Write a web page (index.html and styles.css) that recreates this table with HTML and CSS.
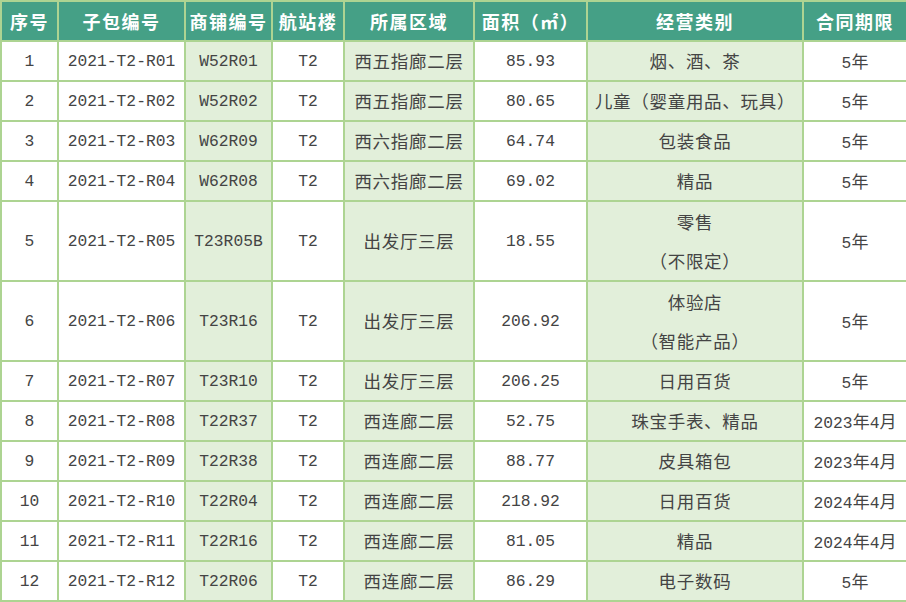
FILE: index.html
```html
<!DOCTYPE html>
<html lang="zh">
<head>
<meta charset="utf-8">
<link rel="stylesheet" href="styles.css">
</head>
<body>
<table class="grid">
  <colgroup>
    <col class="c1"><col class="c2"><col class="c3"><col class="c4"><col class="c5"><col class="c6"><col class="c7"><col class="c8">
  </colgroup>
  <thead>
    <tr><th>序号</th><th>子包编号</th><th>商铺编号</th><th>航站楼</th><th>所属区域</th><th>面积（㎡）</th><th>经营类别</th><th>合同期限</th></tr>
  </thead>
  <tbody>
    <tr><td class="n">1</td><td class="n">2021-T2-R01</td><td class="n alt">W52R01</td><td class="n">T2</td><td class="z alt">西五指廊二层</td><td class="n">85.93</td><td class="z alt">烟、酒、茶</td><td class="n">5<span class="z">年</span></td></tr>
    <tr><td class="n">2</td><td class="n">2021-T2-R02</td><td class="n alt">W52R02</td><td class="n">T2</td><td class="z alt">西五指廊二层</td><td class="n">80.65</td><td class="z alt">儿童（婴童用品、玩具）</td><td class="n">5<span class="z">年</span></td></tr>
    <tr><td class="n">3</td><td class="n">2021-T2-R03</td><td class="n alt">W62R09</td><td class="n">T2</td><td class="z alt">西六指廊二层</td><td class="n">64.74</td><td class="z alt">包装食品</td><td class="n">5<span class="z">年</span></td></tr>
    <tr><td class="n">4</td><td class="n">2021-T2-R04</td><td class="n alt">W62R08</td><td class="n">T2</td><td class="z alt">西六指廊二层</td><td class="n">69.02</td><td class="z alt">精品</td><td class="n">5<span class="z">年</span></td></tr>
    <tr class="tall"><td class="n">5</td><td class="n">2021-T2-R05</td><td class="n alt">T23R05B</td><td class="n">T2</td><td class="z alt">出发厅三层</td><td class="n">18.55</td><td class="z alt two">零售<br>（不限定）</td><td class="n">5<span class="z">年</span></td></tr>
    <tr class="tall"><td class="n">6</td><td class="n">2021-T2-R06</td><td class="n alt">T23R16</td><td class="n">T2</td><td class="z alt">出发厅三层</td><td class="n">206.92</td><td class="z alt two">体验店<br>（智能产品）</td><td class="n">5<span class="z">年</span></td></tr>
    <tr><td class="n">7</td><td class="n">2021-T2-R07</td><td class="n alt">T23R10</td><td class="n">T2</td><td class="z alt">出发厅三层</td><td class="n">206.25</td><td class="z alt">日用百货</td><td class="n">5<span class="z">年</span></td></tr>
    <tr><td class="n">8</td><td class="n">2021-T2-R08</td><td class="n alt">T22R37</td><td class="n">T2</td><td class="z alt">西连廊二层</td><td class="n">52.75</td><td class="z alt">珠宝手表、精品</td><td class="n">2023<span class="z">年</span>4<span class="z">月</span></td></tr>
    <tr><td class="n">9</td><td class="n">2021-T2-R09</td><td class="n alt">T22R38</td><td class="n">T2</td><td class="z alt">西连廊二层</td><td class="n">88.77</td><td class="z alt">皮具箱包</td><td class="n">2023<span class="z">年</span>4<span class="z">月</span></td></tr>
    <tr><td class="n">10</td><td class="n">2021-T2-R10</td><td class="n alt">T22R04</td><td class="n">T2</td><td class="z alt">西连廊二层</td><td class="n">218.92</td><td class="z alt">日用百货</td><td class="n">2024<span class="z">年</span>4<span class="z">月</span></td></tr>
    <tr><td class="n">11</td><td class="n">2021-T2-R11</td><td class="n alt">T22R16</td><td class="n">T2</td><td class="z alt">西连廊二层</td><td class="n">81.05</td><td class="z alt">精品</td><td class="n">2024<span class="z">年</span>4<span class="z">月</span></td></tr>
    <tr><td class="n">12</td><td class="n">2021-T2-R12</td><td class="n alt">T22R06</td><td class="n">T2</td><td class="z alt">西连廊二层</td><td class="n">86.29</td><td class="z alt">电子数码</td><td class="n">5<span class="z">年</span></td></tr>
  </tbody>
</table>
</body>
</html>
```

FILE: styles.css
```css
html, body {
  margin: 0;
  padding: 0;
  background: #ffffff;
}
.grid {
  border-collapse: collapse;
  table-layout: fixed;
  width: 906px;
  color: #444444;
  font-family: "Liberation Mono", "Noto Sans CJK SC", monospace;
}
.c1 { width: 57px; }
.c2 { width: 127px; }
.c3 { width: 87px; }
.c4 { width: 72px; }
.c5 { width: 130px; }
.c6 { width: 113px; }
.c7 { width: 216px; }
.c8 { width: 104px; }
.grid th, .grid td {
  border: 2px solid #add492;
  padding: 0;
  text-align: center;
  vertical-align: middle;
  height: 38px;
  line-height: 20px;
  white-space: nowrap;
  overflow: hidden;
}
.grid th {
  background: #45a086;
  color: #ffffff;
  font-family: "Noto Sans CJK SC", sans-serif;
  font-weight: 700;
  font-size: 18px;
  letter-spacing: 1.5px;
}
.grid td.n {
  font-size: 16.3px;
  padding-top: 2px;
  height: 36px;
}
.grid td.z, .grid span.z {
  font-family: "Noto Sans CJK SC", sans-serif;
  font-size: 17.5px;
  letter-spacing: 0.7px;
  font-weight: 400;
}
.grid span.z {
  letter-spacing: 0;
  font-size: 17px;
}
.grid td.alt {
  background: #e2efda;
}
.grid tr.tall td {
  height: 78px;
}
.grid tr.tall td.n {
  height: 76px;
}
.grid td.two {
  line-height: 39px;
}
```
